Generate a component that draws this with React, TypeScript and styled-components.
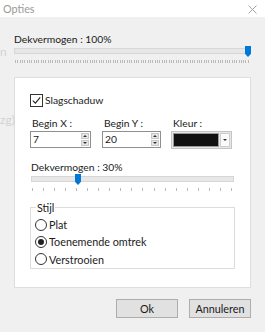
import React, { FC } from "react";
import styled, { createGlobalStyle } from "styled-components";

const GlobalStyle = createGlobalStyle`
  html, body {
    margin: 0;
    padding: 0;
    background: #f0f0f0;
  }
  body {
    font-family: Lato, "Noto Sans", "Liberation Sans", sans-serif;
    font-size: 10.3px;
    color: #1a1a1a;
  }
`;

const Window = styled.div`
  position: relative;
  width: 265px;
  height: 332px;
  background: #f0f0f0;
  overflow: hidden;
`;

const TitleBar = styled.div`
  height: 17px;
  background: #fff;
  display: flex;
  align-items: center;
  justify-content: space-between;
  padding: 0 8px 0 3px;
  color: #9a9a9a;
  font-size: 10.8px;
  line-height: 15px;
`;

const CloseIcon = styled.svg`
  width: 9px;
  height: 9px;
  margin-top: 2px;
`;

// text of the window behind, showing through
const Ghost = styled.span<{ $top: number }>`
  position: absolute;
  left: 0;
  top: ${(p) => p.$top}px;
  color: #d2d2d2;
  font-size: 12px;
  line-height: 15px;
`;

const Main = styled.div`
  padding: 15px 14px 0 14px;
`;

const Label = styled.div`
  line-height: 15px;
  height: 15px;
  white-space: nowrap;
`;

const SliderWrap = styled.div<{ $width: number; $indent: number }>`
  width: ${(p) => p.$width}px;
  margin-left: ${(p) => p.$indent}px;
`;

const SliderBody = styled.div`
  position: relative;
  margin-top: 1px;
  height: 16px;
`;

const Track = styled.div`
  height: 4px;
  border: 1px solid #d6d6d6;
  background: #e7e7e7;
`;

const Thumb = styled.div`
  position: absolute;
  top: -2px;
  width: 6px;
  height: 11px;
  background: #0078d7;
  clip-path: polygon(0 0, 100% 0, 100% 70%, 50% 100%, 0 70%);
`;

const Ticks = styled.div<{ $top: number }>`
  display: flex;
  justify-content: space-between;
  margin-top: ${(p) => p.$top}px;
  padding: 0 2px 0 1px;
`;

const Tick = styled.span`
  width: 1px;
  height: 3px;
  background: #b9b9b9;
`;

interface SliderProps {
  label: string;
  width: number;
  indent?: number;
  ticks: number;
  position: number;
  tickGap: number;
}

const Slider: FC<SliderProps> = ({
  label,
  width,
  indent = 0,
  ticks,
  position,
  tickGap,
}) => (
  <SliderWrap $width={width} $indent={indent}>
    <Label>{label}</Label>
    <SliderBody>
      <Track />
      <Thumb style={{ left: Math.round(position * (width - 6)) }} />
      <Ticks $top={tickGap}>
        {Array.from({ length: ticks }).map((_, i) => (
          <Tick key={i} />
        ))}
      </Ticks>
    </SliderBody>
  </SliderWrap>
);

const Panel = styled.div`
  margin-top: 13px;
  height: 211px;
  background: #fff;
  border: 1px solid #dedede;
  padding: 16px 15px 0 15px;
  box-sizing: border-box;
`;

const CheckRow = styled.label`
  display: flex;
  align-items: center;
  gap: 2px;
  height: 13px;
  line-height: 13px;
`;

const CheckBox = styled.span`
  width: 11px;
  height: 11px;
  border: 1px solid #333;
  display: flex;
  align-items: center;
  justify-content: center;
  background: #fff;
`;

const FieldsRow = styled.div`
  display: flex;
  margin-top: 9px;
`;

const Field = styled.div<{ $width: number; $gap: number }>`
  width: ${(p) => p.$width}px;
  margin-right: ${(p) => p.$gap}px;
  display: flex;
  flex-direction: column;
`;

const FieldLabel = styled(Label)`
  padding-left: 2px;
`;

const SpinBox = styled.div`
  height: 17px;
  border: 1px solid #8f8f8f;
  box-sizing: border-box;
  display: flex;
  align-items: center;
  justify-content: space-between;
  padding: 0 1px 0 2px;
  background: #fff;
  line-height: 15px;
`;

const SpinButtons = styled.div`
  display: flex;
  flex-direction: column;
  gap: 1px;
`;

const SpinButton = styled.span`
  width: 8px;
  height: 6px;
  background: #e6e6e6;
  border: 1px solid #c8c8c8;
  box-sizing: border-box;
  display: flex;
  align-items: center;
  justify-content: center;
`;

const Arrow = styled.span<{ $up?: boolean }>`
  width: 0;
  height: 0;
  border-left: 2px solid transparent;
  border-right: 2px solid transparent;
  ${(p) =>
    p.$up ? "border-bottom: 2px solid #333;" : "border-top: 2px solid #333;"}
`;

const ColorPicker = styled.div`
  height: 18px;
  border: 1px solid #c5c5c5;
  background: #e6e6e6;
  box-sizing: border-box;
  display: flex;
  align-items: center;
  padding: 1px;
  gap: 1px;
`;

const Swatch = styled.span<{ $color: string }>`
  flex: 1;
  height: 14px;
  background: ${(p) => p.$color};
  border: 1px solid #9a9a9a;
  box-sizing: border-box;
`;

const DropButton = styled.span`
  width: 10px;
  height: 14px;
  background: #fafafa;
  border: 1px solid #cfcfcf;
  box-sizing: border-box;
  display: flex;
  align-items: center;
  justify-content: center;
`;

const SecondSlider = styled.div`
  margin-top: 11px;
`;

const GroupBox = styled.fieldset`
  margin: 9px 0 0 0;
  width: 205px;
  height: 68px;
  box-sizing: border-box;
  border: 1px solid #dcdcdc;
  padding: 2px 0 0 4px;
  display: flex;
  flex-direction: column;
`;

const Legend = styled.legend`
  padding: 0 1px;
  margin-left: 1px;
  line-height: 13px;
  font-size: 10.8px;
`;

const RadioRow = styled.label`
  display: flex;
  align-items: center;
  gap: 2px;
  height: 18px;
  line-height: 15px;
  font-size: 10.8px;
`;

const RadioCircle = styled.span<{ $checked: boolean }>`
  width: 12px;
  height: 12px;
  border: 1px solid #333;
  border-radius: 50%;
  box-sizing: border-box;
  display: flex;
  align-items: center;
  justify-content: center;
  &::after {
    content: "";
    width: 6px;
    height: 6px;
    border-radius: 50%;
    background: ${(p) => (p.$checked ? "#222" : "transparent")};
  }
`;

const ButtonRow = styled.div`
  display: flex;
  justify-content: flex-end;
  gap: 11px;
  margin-top: 11px;
`;

const Button = styled.button`
  width: 62px;
  height: 19px;
  padding: 0;
  background: #e1e1e1;
  border: 1px solid #adadad;
  font: inherit;
  font-size: 10.8px;
  line-height: 15px;
  color: #1a1a1a;
`;

const radios = [
  { label: "Plat", checked: false },
  { label: "Toenemende omtrek", checked: true },
  { label: "Verstrooien", checked: false },
];

const Spin: FC<{ value: string }> = ({ value }) => (
  <SpinBox>
    <span>{value}</span>
    <SpinButtons>
      <SpinButton>
        <Arrow $up />
      </SpinButton>
      <SpinButton>
        <Arrow />
      </SpinButton>
    </SpinButtons>
  </SpinBox>
);

const App: FC = () => (
  <Window>
    <GlobalStyle />
    <TitleBar>
      <span>Opties</span>
      <CloseIcon viewBox="0 0 9 9">
        <path d="M0.5 0.5 L8.5 8.5 M8.5 0.5 L0.5 8.5" stroke="#999" strokeWidth="0.9" />
      </CloseIcon>
    </TitleBar>
    <Ghost $top={44}>n</Ghost>
    <Ghost $top={112}>zg)</Ghost>
    <Main>
      <Slider
        label="Dekvermogen : 100%"
        width={237}
        ticks={101}
        position={1}
        tickGap={6}
      />
      <Panel>
        <CheckRow>
          <CheckBox>
            <svg width="9" height="9" viewBox="0 0 9 9">
              <path d="M0.8 4.6 L3.4 7.2 L8.2 1.4" fill="none" stroke="#222" strokeWidth="1.1" />
            </svg>
          </CheckBox>
          Slagschaduw
        </CheckRow>
        <FieldsRow>
          <Field $width={61} $gap={11}>
            <FieldLabel>Begin X :</FieldLabel>
            <Spin value="7" />
          </Field>
          <Field $width={59} $gap={10}>
            <FieldLabel>Begin Y :</FieldLabel>
            <Spin value="20" />
          </Field>
          <Field $width={61} $gap={0}>
            <FieldLabel>Kleur :</FieldLabel>
            <ColorPicker>
              <Swatch $color="#111" />
              <DropButton>
                <Arrow />
              </DropButton>
            </ColorPicker>
          </Field>
        </FieldsRow>
        <SecondSlider>
          <Slider
            label="Dekvermogen : 30%"
            width={203}
            indent={1}
            ticks={19}
            position={0.225}
            tickGap={6}
          />
        </SecondSlider>
        <GroupBox>
          <Legend>Stijl</Legend>
          {radios.map((r) => (
            <RadioRow key={r.label}>
              <RadioCircle $checked={r.checked} />
              {r.label}
            </RadioRow>
          ))}
        </GroupBox>
      </Panel>
      <ButtonRow>
        <Button>Ok</Button>
        <Button>Annuleren</Button>
      </ButtonRow>
    </Main>
  </Window>
);

export default App;
